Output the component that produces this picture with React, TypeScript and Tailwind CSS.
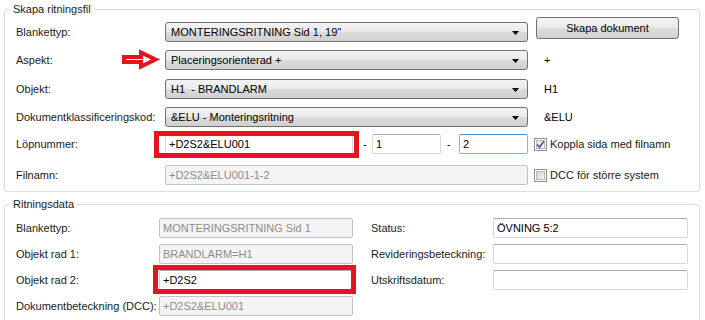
import React from "react";

const Combo = ({ text }: { text: string }) => (
  <div className="h-[20px] w-[363px] shrink-0 border border-[#707070] rounded-[3px] bg-[linear-gradient(#f4f4f4,#e9e9e9_50%,#dcdcdc_50%,#d0d0d0)] flex items-center pl-[5px] pr-[8px]">
    <span className="flex-1 text-black whitespace-pre">{text}</span>
    <svg width="7" height="4" viewBox="0 0 7 4" className="mt-[1px]">
      <polygon points="0,0 7,0 3.5,4" fill="#000" />
    </svg>
  </div>
);

const TextBox = ({
  text,
  w,
  disabled,
  focused,
}: {
  text?: string;
  w: string;
  disabled?: boolean;
  focused?: boolean;
}) => (
  <div
    className={
      "h-[20px] shrink-0 border rounded-[2px] flex items-center pl-[3px] whitespace-nowrap " +
      w +
      " " +
      (disabled
        ? "bg-[#f4f4f4] border-[#c2c2c2] text-[#8c8c8c]"
        : focused
        ? "bg-white border-[#89aed6] border-t-[#5a8fc7] text-black"
        : "bg-white border-[#d6d8de] border-t-[#abadb3] text-black")
    }
  >
    {text}
  </div>
);

const CheckBox = ({ checked, label }: { checked?: boolean; label: string }) => (
  <div className="flex items-center">
    <div className="w-[13px] h-[13px] border border-[#8e8f8f] bg-white p-[1px] relative">
      <div
        className={
          "w-full h-full border border-[#b8b8b8] " +
          (checked
            ? "bg-[linear-gradient(135deg,#e6e8ea,#fbfbfb)]"
            : "bg-[linear-gradient(135deg,#cfd1d4,#f6f6f6)]")
        }
      />
      {checked && (
        <svg width="13" height="13" viewBox="0 0 13 13" className="absolute left-[-1px] top-[-1px]">
          <path d="M3 6.5 L5.5 9.2 L10 3.2" fill="none" stroke="#4b5f91" strokeWidth="1.8" />
        </svg>
      )}
    </div>
    <span className="ml-[3px] text-[#1a1a1a] whitespace-nowrap">{label}</span>
  </div>
);

const Label = ({ text, w }: { text: string; w: string }) => (
  <span className={"shrink-0 whitespace-nowrap text-[#1a1a1a] " + w}>{text}</span>
);

export default function App() {
  return (
    <div
      className="relative w-[705px] h-[320px] overflow-hidden bg-white text-[11px]"
      style={{ fontFamily: '"Liberation Sans", Arial, sans-serif' }}
    >
      <fieldset className="ml-[4px] mt-[3px] w-[696px] border border-[#d5dfe5] rounded-[3px]">
        <legend className="ml-[5px] px-[3px] leading-[13px] text-[#1a1a1a]">Skapa ritningsfil</legend>
        <div className="flex flex-col pl-[11px] pb-[6px]">
          <div className="flex items-center h-[20px] mt-[6px]">
            <Label text="Blankettyp:" w="w-[149px]" />
            <Combo text={"MONTERINGSRITNING Sid 1, 19''"} />
            <button className="self-start -mt-[5px] ml-[8px] w-[143px] h-[22px] border border-[#707070] rounded-[3px] bg-[linear-gradient(#f4f4f4,#eaeaea_50%,#dddddd_50%,#d2d2d2)] text-black">
              Skapa dokument
            </button>
          </div>
          <div className="flex items-center h-[20px] mt-[8px]">
            <Label text="Aspekt:" w="w-[149px]" />
            <Combo text="Placeringsorienterad +" />
            <span className="ml-[16px] text-black">+</span>
          </div>
          <div className="flex items-center h-[20px] mt-[9px]">
            <Label text="Objekt:" w="w-[149px]" />
            <Combo text="H1  - BRANDLARM" />
            <span className="ml-[16px] text-black">H1</span>
          </div>
          <div className="flex items-center h-[20px] mt-[8px]">
            <Label text="Dokumentklassificeringskod:" w="w-[149px]" />
            <Combo text="&ELU - Monteringsritning" />
            <span className="ml-[16px] text-black">&amp;ELU</span>
          </div>
          <div className="flex items-center h-[20px] mt-[7px]">
            <Label text="Löpnummer:" w="w-[149px]" />
            <TextBox text="+D2S2&ELU001" w="w-[188px]" />
            <span className="w-[19px] shrink-0 pl-[10px] text-black">-</span>
            <TextBox text="1" w="w-[69px]" />
            <span className="w-[18px] shrink-0 pl-[6px] text-black">-</span>
            <TextBox text="2" w="w-[69px]" focused />
            <div className="ml-[6px]">
              <CheckBox checked label="Koppla sida med filnamn" />
            </div>
          </div>
          <div className="flex items-center h-[20px] mt-[11px]">
            <Label text="Filnamn:" w="w-[149px]" />
            <TextBox text="+D2S2&ELU001-1-2" w="w-[363px]" disabled />
            <div className="ml-[6px]">
              <CheckBox label="DCC för större system" />
            </div>
          </div>
        </div>
      </fieldset>

      <fieldset className="ml-[4px] mt-[6px] w-[696px] border border-[#d5dfe5] rounded-[3px]">
        <legend className="ml-[5px] px-[3px] leading-[13px] text-[#1a1a1a]">Ritningsdata</legend>
        <div className="grid grid-cols-[143px_194px_18px_122px_195px] auto-rows-[20px] gap-y-[6px] items-center pl-[11px] pt-[7px] pb-[12px]">
          <Label text="Blankettyp:" w="" />
          <TextBox text="MONTERINGSRITNING Sid 1" w="w-[194px]" disabled />
          <span />
          <Label text="Status:" w="" />
          <TextBox text="ÖVNING 5:2" w="w-[195px]" />

          <Label text="Objekt rad 1:" w="" />
          <TextBox text="BRANDLARM=H1" w="w-[194px]" disabled />
          <span />
          <Label text="Revideringsbeteckning:" w="" />
          <TextBox w="w-[195px]" />

          <Label text="Objekt rad 2:" w="" />
          <TextBox text="+D2S2" w="w-[194px]" />
          <span />
          <Label text="Utskriftsdatum:" w="" />
          <TextBox w="w-[195px]" />

          <Label text="Dokumentbeteckning (DCC):" w="" />
          <TextBox text="+D2S2&ELU001" w="w-[194px]" disabled />
          <span />
          <span />
          <span />
        </div>
      </fieldset>

      {/* annotations */}
      <div className="absolute left-[154px] top-[131px] w-[205px] h-[27px] border-[5px] border-[#e3141e]" />
      <div className="absolute left-[153px] top-[265px] w-[203px] h-[29px] border-[5px] border-[#e3141e]" />
      <svg
        className="absolute left-[120px] top-[48px]"
        width="41"
        height="23"
        viewBox="0 0 41 23"
      >
        <polygon
          points="4,9 21,9 21,4.5 35.5,11.5 21,18.5 21,14 4,14"
          fill="#fff"
          stroke="#e3141e"
          strokeWidth="4"
          strokeLinejoin="miter"
          strokeMiterlimit="3"
        />
      </svg>
    </div>
  );
}
